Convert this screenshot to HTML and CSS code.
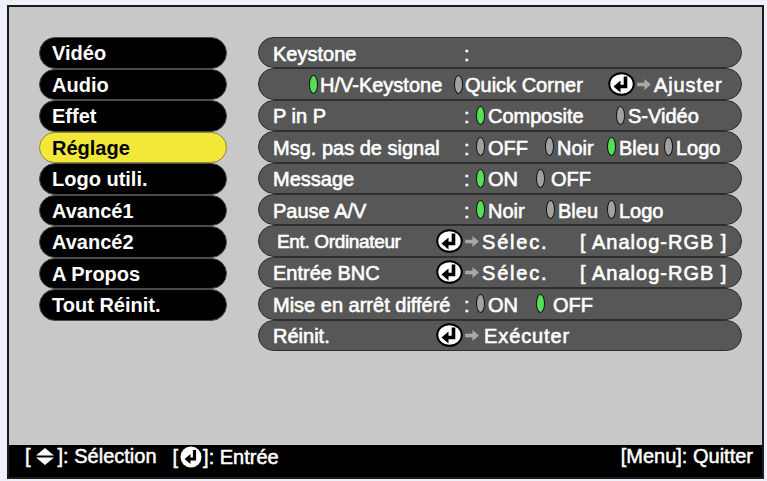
FILE: index.html
```html
<!DOCTYPE html>
<html lang="fr">
<head>
<meta charset="utf-8">
<title>Réglage</title>
<link rel="stylesheet" href="styles.css">
</head>
<body>
<div class="screen">
  <div class="main">
    <ul class="menu">
      <li class="item">Vidéo</li>
      <li class="item">Audio</li>
      <li class="item">Effet</li>
      <li class="item active">Réglage</li>
      <li class="item">Logo utili.</li>
      <li class="item">Avancé1</li>
      <li class="item">Avancé2</li>
      <li class="item">A Propos</li>
      <li class="item">Tout Réinit.</li>
    </ul>
    <div class="panel">
      <div class="row">
        <span class="lbl">Keystone</span><span class="colon">:</span>
      </div>
      <div class="row">
        <span class="opt c-hv"><i class="rd on"></i>H/V-Keystone</span>
        <span class="opt c-qc"><i class="rd"></i>Quick Corner</span>
        <span class="act">
          <svg class="enter" viewBox="0 0 27 24"><ellipse cx="13.5" cy="12" rx="12.2" ry="10.8" fill="#fff" stroke="#000" stroke-width="2"/><path d="M17.5 4.5V14.5H11" fill="none" stroke="#000" stroke-width="3.6"/><path d="M12.5 8.5V20.5L5.5 14.5Z" fill="#000"/></svg>
          <svg class="arr" viewBox="0 0 15 12"><path d="M0 4H8V0L15 6L8 12V8H0Z" fill="#a8a8a8"/></svg>
          <span class="atext">Ajuster</span>
        </span>
      </div>
      <div class="row">
        <span class="lbl">P in P</span><span class="colon">:</span>
        <span class="opt c140"><i class="rd on"></i>Composite</span>
        <span class="opt"><i class="rd"></i>S-Vidéo</span>
      </div>
      <div class="row">
        <span class="lbl">Msg. pas de signal</span><span class="colon">:</span>
        <span class="opt c69"><i class="rd"></i>OFF</span>
        <span class="opt c62"><i class="rd"></i>Noir</span>
        <span class="opt c57"><i class="rd on"></i>Bleu</span>
        <span class="opt"><i class="rd"></i>Logo</span>
      </div>
      <div class="row">
        <span class="lbl">Message</span><span class="colon">:</span>
        <span class="opt c60"><i class="rd on"></i>ON</span>
        <span class="opt wide"><i class="rd"></i>OFF</span>
      </div>
      <div class="row">
        <span class="lbl">Pause A/V</span><span class="colon">:</span>
        <span class="opt c70"><i class="rd on"></i>Noir</span>
        <span class="opt c61"><i class="rd"></i>Bleu</span>
        <span class="opt"><i class="rd"></i>Logo</span>
      </div>
      <div class="row">
        <span class="lbl short small">Ent. Ordinateur</span>
        <span class="act">
          <svg class="enter" viewBox="0 0 27 24"><ellipse cx="13.5" cy="12" rx="12.2" ry="10.8" fill="#fff" stroke="#000" stroke-width="2"/><path d="M17.5 4.5V14.5H11" fill="none" stroke="#000" stroke-width="3.6"/><path d="M12.5 8.5V20.5L5.5 14.5Z" fill="#000"/></svg>
          <svg class="arr" viewBox="0 0 15 12"><path d="M0 4H8V0L15 6L8 12V8H0Z" fill="#a8a8a8"/></svg>
          <span class="atext sel">Sélec.</span>
          <span class="atext src">[ Analog-RGB ]</span>
        </span>
      </div>
      <div class="row">
        <span class="lbl short">Entrée BNC</span>
        <span class="act">
          <svg class="enter" viewBox="0 0 27 24"><ellipse cx="13.5" cy="12" rx="12.2" ry="10.8" fill="#fff" stroke="#000" stroke-width="2"/><path d="M17.5 4.5V14.5H11" fill="none" stroke="#000" stroke-width="3.6"/><path d="M12.5 8.5V20.5L5.5 14.5Z" fill="#000"/></svg>
          <svg class="arr" viewBox="0 0 15 12"><path d="M0 4H8V0L15 6L8 12V8H0Z" fill="#a8a8a8"/></svg>
          <span class="atext sel">Sélec.</span>
          <span class="atext src">[ Analog-RGB ]</span>
        </span>
      </div>
      <div class="row">
        <span class="lbl">Mise en arrêt différé</span><span class="colon">:</span>
        <span class="opt c60"><i class="rd"></i>ON</span>
        <span class="opt wider"><i class="rd on"></i>OFF</span>
      </div>
      <div class="row">
        <span class="lbl short">Réinit.</span>
        <span class="act">
          <svg class="enter" viewBox="0 0 27 24"><ellipse cx="13.5" cy="12" rx="12.2" ry="10.8" fill="#fff" stroke="#000" stroke-width="2"/><path d="M17.5 4.5V14.5H11" fill="none" stroke="#000" stroke-width="3.6"/><path d="M12.5 8.5V20.5L5.5 14.5Z" fill="#000"/></svg>
          <svg class="arr" viewBox="0 0 15 12"><path d="M0 4H8V0L15 6L8 12V8H0Z" fill="#a8a8a8"/></svg>
          <span class="atext exe">Exécuter</span>
        </span>
      </div>
    </div>
  </div>
  <div class="footer">
    <div class="hint">[<svg class="updown" viewBox="0 0 19 17"><path d="M0.5 7.5L9.5 0L18.5 7.5Z" fill="#fff"/><path d="M0.5 9.5H18.5L9.5 17Z" fill="#fff"/></svg>]: Sélection</div>
    <div class="hint hint2">[<svg class="fenter" viewBox="0 0 22 22"><circle cx="11" cy="11" r="10.5" fill="#fff"/><path d="M14.5 4V13H9.5" fill="none" stroke="#000" stroke-width="3.2"/><path d="M10.5 8V18L4.5 13Z" fill="#000"/></svg>]: Entrée</div>
    <div class="hint quit">[Menu]: Quitter</div>
  </div>
</div>
</body>
</html>
```
FILE: styles.css
```css
* { box-sizing: border-box; }

html, body {
  margin: 0;
  padding: 0;
  background: #eef0fa;
  font-family: "Liberation Sans", Arial, sans-serif;
}

.screen {
  margin: 5px 0 0 7px;
  width: 757px;
  height: 474px;
  border: 2px solid #1c1c1c;
  background: #c8c8c8;
  display: flex;
  flex-direction: column;
}

.main {
  height: 438px;
  padding: 30px 0 0 30px;
  display: flex;
  gap: 31px;
  align-items: flex-start;
}

/* left menu */
.menu {
  list-style: none;
  margin: 0;
  padding: 0;
  width: 188px;
}

.item {
  height: 31.55px;
  line-height: 31.55px;
  padding-left: 12px;
  background: #000;
  color: #fff;
  border: 1px solid #4c4c4c;
  border-radius: 16px;
  font-size: 20px;
  font-weight: bold;
  white-space: nowrap;
}

.item.active {
  background: #f3e737;
  color: #000;
  border-color: #8d8740;
}

/* right panel */
.panel {
  width: 484px;
}

.row {
  height: 31.4px;
  padding: 2px 0 0 14px;
  display: flex;
  align-items: center;
  background: #575757;
  border: 1px solid #2e2e2e;
  border-radius: 16px;
  color: #fff;
  font-size: 20px;
  line-height: 22px;
  white-space: nowrap;
  -webkit-text-stroke: 0.6px #fff;
}

.lbl {
  width: 191px;
  flex: none;
}

.lbl.short {
  width: 163px;
}

.lbl.small {
  font-size: 19px;
  padding-left: 4px;
  letter-spacing: -0.35px;
}

.colon {
  width: 12px;
  flex: none;
}

.opt {
  display: flex;
  align-items: center;
  gap: 3px;
  flex: none;
}

.rd {
  display: block;
  width: 9px;
  height: 19px;
  border: 1.5px solid #111;
  border-radius: 50%;
  background: #a2a2a2;
  flex: none;
  margin-top: -2px;
}

.rd.on {
  background: #55e055;
}

.c-hv { margin-left: 36px; width: 145px; gap: 2px; }
.c-qc { width: 154px; gap: 2px; }
.c140 { width: 140px; }
.c69 { width: 69px; }
.c62 { width: 62px; }
.c57 { width: 57px; }
.c60 { width: 60px; }
.c70 { width: 70px; }
.c61 { width: 61px; }
.opt.wide { gap: 6px; }
.opt.wider { gap: 8px; }

.act {
  display: flex;
  align-items: center;
  flex: none;
}

.enter {
  width: 27px;
  height: 24px;
  display: block;
  margin-top: -2px;
}

.arr {
  width: 14px;
  height: 11px;
  display: block;
  margin-left: 2px;
  margin-right: 3px;
  margin-top: -2px;
}

.atext {
  letter-spacing: 0.9px;
}

.sel {
  width: 98px;
  letter-spacing: 1.8px;
}

.src {
  letter-spacing: 1px;
  word-spacing: 0;
}

.exe {
  margin-left: 2px;
}

/* footer */
.footer {
  height: 32px;
  background: #000;
  color: #fff;
  font-size: 20px;
  line-height: 20px;
  display: flex;
  align-items: flex-start;
  padding: 1px 9px 0 16px;
  white-space: nowrap;
  -webkit-text-stroke: 0.5px #fff;
}

.hint {
  display: flex;
  align-items: center;
}

.hint2 {
  margin-left: 16px;
}

.quit {
  margin-left: auto;
}

.updown {
  width: 20px;
  height: 17px;
  display: block;
  margin: 0 3px 0 4px;
}

.fenter {
  width: 22px;
  height: 22px;
  display: block;
  margin: 0 1px 0 2px;
}
```
